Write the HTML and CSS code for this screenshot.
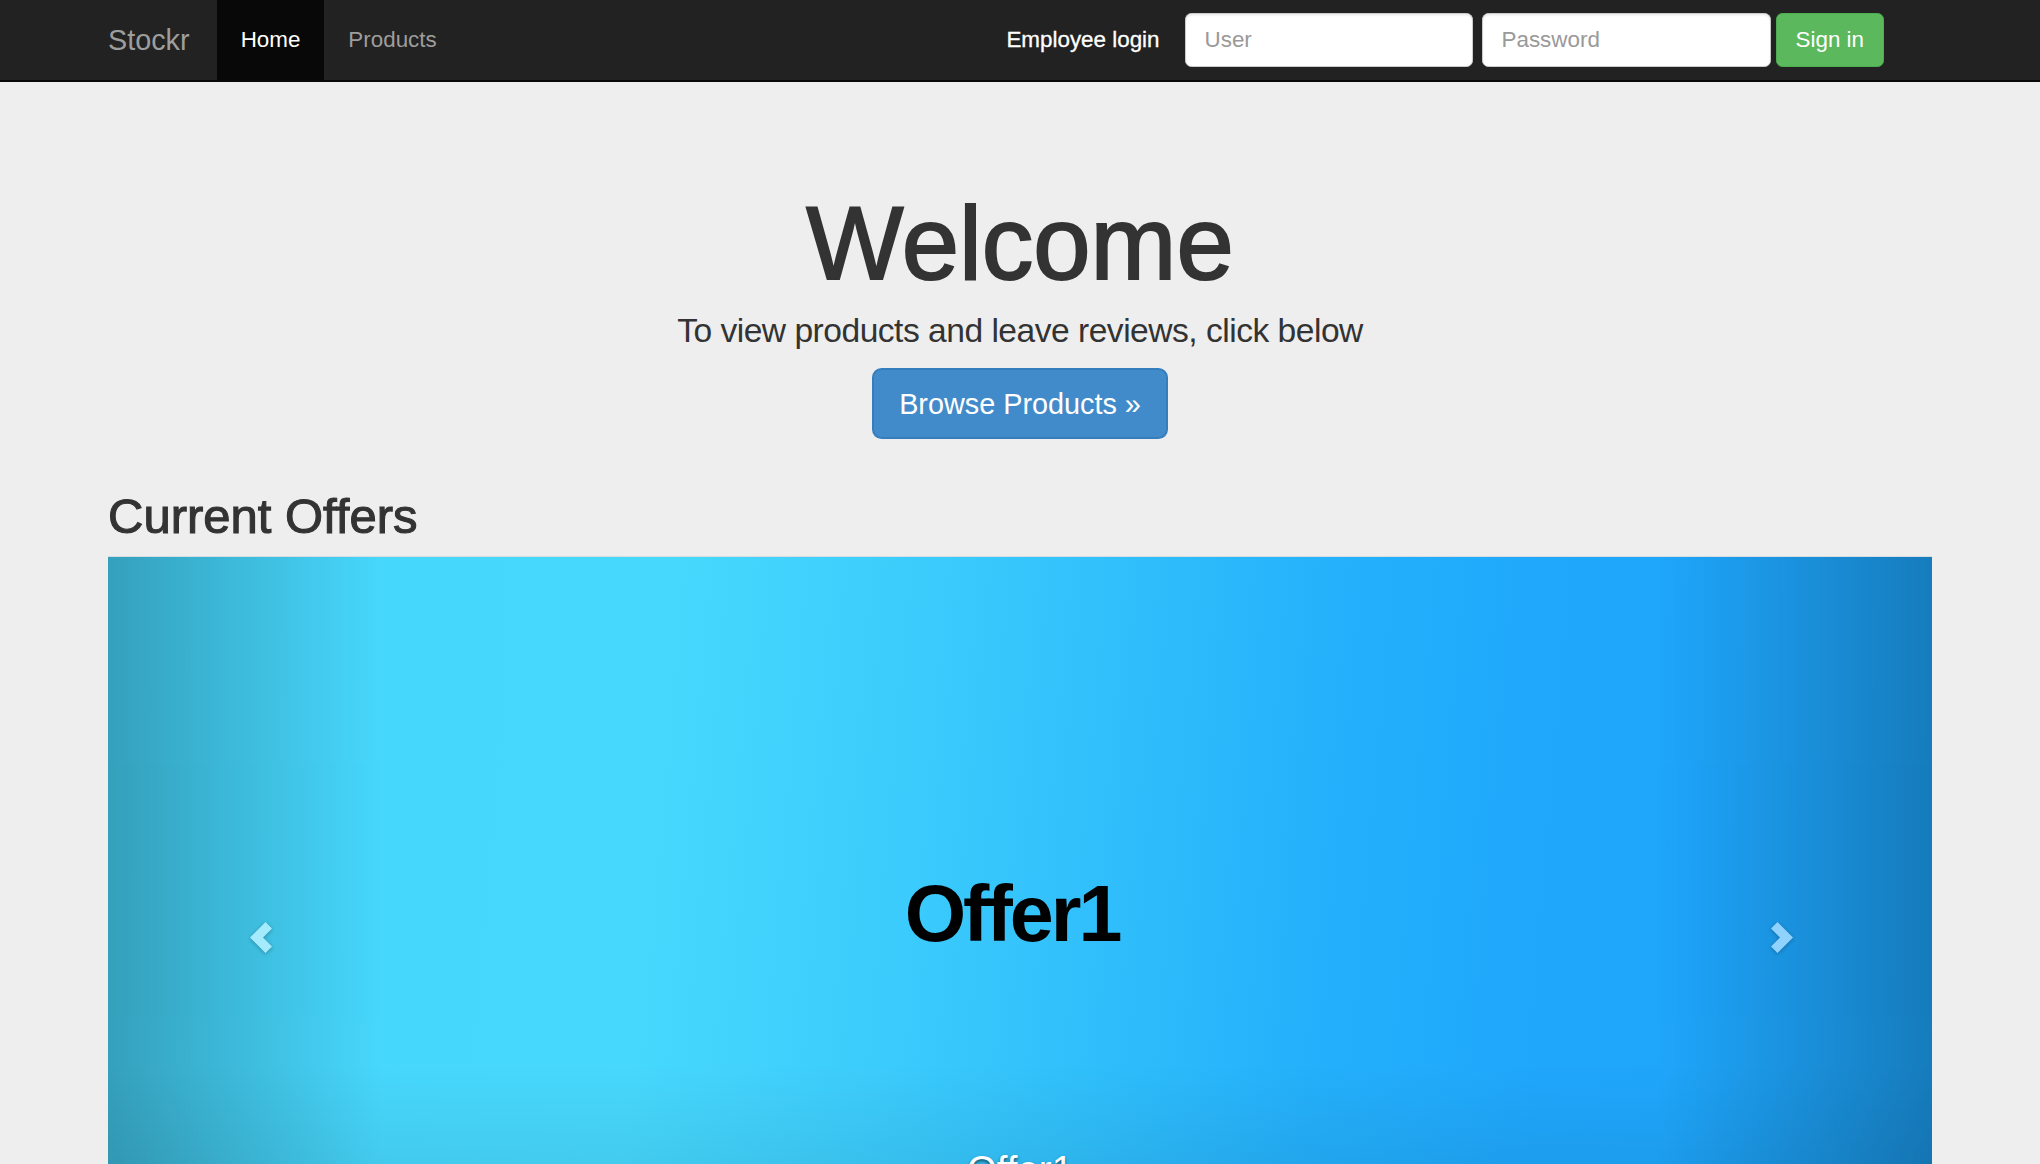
FILE: index.html
```html
<!DOCTYPE html>
<html lang="en">
<head>
<meta charset="utf-8">
<title>Stockr</title>
<link rel="stylesheet" href="styles.css">
</head>
<body>
<div class="page">
  <nav class="navbar">
    <div class="nav-inner">
      <div class="nav-left">
        <a class="brand" href="#">Stockr</a>
        <ul class="nav-links">
          <li class="active"><a href="#">Home</a></li>
          <li><a href="#">Products</a></li>
        </ul>
      </div>
      <form class="login">
        <span class="login-label">Employee login</span>
        <input class="field field-user" type="text" placeholder="User">
        <input class="field field-pass" type="password" placeholder="Password">
        <button class="btn-signin" type="button">Sign in</button>
      </form>
    </div>
  </nav>

  <main class="content">
    <section class="hero">
      <h1 class="hero-title">Welcome</h1>
      <p class="hero-sub">To view products and leave reviews, click below</p>
      <a class="btn-browse" href="#">Browse Products &raquo;</a>
    </section>

    <section class="offers">
      <h2 class="offers-title">Current Offers</h2>
      <div class="carousel">
        <div class="slide">
          <span class="slide-text">Offer1</span>
        </div>
        <a class="control control-left" href="#">
          <svg class="chev chev-left" width="22" height="31" viewBox="0 0 22 31"><polygon points="0,15.5 15.5,0 22,6.5 13,15.5 22,24.5 15.5,31" fill="#fff"/></svg>
        </a>
        <a class="control control-right" href="#">
          <svg class="chev chev-right" width="22" height="31" viewBox="0 0 22 31"><polygon points="22,15.5 6.5,0 0,6.5 9,15.5 0,24.5 6.5,31" fill="#fff"/></svg>
        </a>
        <div class="caption">
          <h3 class="caption-title">Offer1</h3>
        </div>
      </div>
    </section>
  </main>
</div>
</body>
</html>
```

FILE: styles.css
```css
* { box-sizing: border-box; }

html, body {
  margin: 0;
  padding: 0;
}

body {
  background: #eeeeee;
  font-family: "Liberation Sans", Arial, Helvetica, sans-serif;
  color: #333333;
}

.page {
  height: 100vh;
  overflow: hidden;
}

/* ---------- Navbar ---------- */
.navbar {
  background: #222222;
  border-bottom: 2px solid #080808;
  height: 82px;
}

.nav-inner {
  width: 1872px;
  margin: 0 auto;
  padding: 0 24px;
  height: 80px;
  display: flex;
  justify-content: space-between;
  align-items: center;
}

.nav-left {
  display: flex;
  align-items: stretch;
  height: 80px;
}

.brand {
  margin-left: -24px;
  padding: 24px 27px 24px 24px;
  font-size: 28.8px;
  line-height: 32px;
  color: #9d9d9d;
  text-decoration: none;
}

.nav-links {
  list-style: none;
  margin: 0;
  padding: 0;
  display: flex;
}

.nav-links a {
  display: block;
  padding: 24px;
  font-size: 22.4px;
  line-height: 32px;
  color: #9d9d9d;
  text-decoration: none;
}

.nav-links .active a {
  background: #080808;
  color: #ffffff;
}

.login {
  display: flex;
  align-items: center;
  margin: 0 48px 0 0;
}

.login-label {
  font-size: 22.4px;
  line-height: 32px;
  color: #ffffff;
  margin-right: 25px;
  -webkit-text-stroke: 0.3px #ffffff;
}

.field {
  width: 288px;
  height: 54px;
  padding: 9px 19px;
  font-family: "Liberation Sans", Arial, Helvetica, sans-serif;
  font-size: 22.4px;
  color: #555555;
  background: #ffffff;
  border: 1.6px solid #cccccc;
  border-radius: 6.4px;
  box-shadow: inset 0 1.6px 1.6px rgba(0, 0, 0, 0.075);
  outline: none;
}

.field::placeholder { color: #999999; }

.field-pass {
  width: 289px;
  margin-left: 9px;
}

.btn-signin {
  margin-left: 5px;
  height: 54px;
  padding: 0 19px;
  font-family: "Liberation Sans", Arial, Helvetica, sans-serif;
  font-size: 22.4px;
  color: #ffffff;
  background: #5cb85c;
  border: 1.6px solid #4cae4c;
  border-radius: 6.4px;
}

/* ---------- Hero ---------- */
.hero {
  display: flex;
  flex-direction: column;
  align-items: center;
  padding-top: 106px;
  text-align: center;
}

.hero-title {
  margin: 0 0 8px;
  font-size: 103px;
  line-height: 111px;
  font-weight: 500;
  color: #333333;
  -webkit-text-stroke: 2px #333333;
}

.hero-sub {
  margin: 0 0 13px;
  font-size: 33.6px;
  line-height: 48px;
  letter-spacing: -0.5px;
  color: #333333;
}

.btn-browse {
  display: inline-block;
  padding: 14.5px 25.6px;
  font-size: 28.8px;
  line-height: 38.4px;
  color: #ffffff;
  background: #428bca;
  border: 2px solid #357ebd;
  border-radius: 9.6px;
  text-decoration: none;
}

/* ---------- Offers ---------- */
.offers {
  width: 1824px;
  margin: 0 auto;
}

.offers-title {
  margin: 49.7px 0 14px;
  font-size: 49px;
  line-height: 54px;
  font-weight: 500;
  color: #333333;
  -webkit-text-stroke: 1.1px #333333;
}

.carousel {
  position: relative;
  height: 744px;
  overflow: hidden;
  box-shadow: 0 -1px 0 #d6dde1;
}

.slide {
  height: 100%;
  display: flex;
  align-items: center;
  justify-content: center;
  padding: 0 16px 30px 0;
  background:
    linear-gradient(to bottom, rgba(0, 0, 0, 0) 68%, rgba(0, 0, 0, 0.07) 84%),
    linear-gradient(95deg, #46d6fc 0%, #47d8fd 30%, #3cccfc 43%, #2fbefb 55%, #24b0fb 66%, #1fa7fc 78%, #1da5fc 100%);
}

.slide-text {
  font-size: 79px;
  font-weight: 700;
  letter-spacing: -3px;
  color: #000000;
}

.control {
  position: absolute;
  top: 0;
  bottom: 0;
  width: 15%;
  opacity: 0.5;
}

.control-left {
  left: 0;
  background-image: linear-gradient(to right, rgba(0, 0, 0, 0.5) 0%, rgba(0, 0, 0, 0.0001) 100%);
}

.control-right {
  right: 0;
  background-image: linear-gradient(to right, rgba(0, 0, 0, 0.0001) 0%, rgba(0, 0, 0, 0.5) 100%);
}

.chev {
  position: absolute;
  top: 365px;
  filter: drop-shadow(0 1.6px 2px rgba(0, 0, 0, 0.6));
}

.chev-left { left: 142px; }
.chev-right { right: 139px; }

.caption {
  position: absolute;
  top: 592px;
  left: 20%;
  right: 20%;
  text-align: center;
  color: #ffffff;
  text-shadow: 0 1.6px 3.2px rgba(0, 0, 0, 0.6);
}

.caption-title {
  margin: 0;
  font-size: 38.4px;
  line-height: 42px;
  font-weight: 500;
}
```
